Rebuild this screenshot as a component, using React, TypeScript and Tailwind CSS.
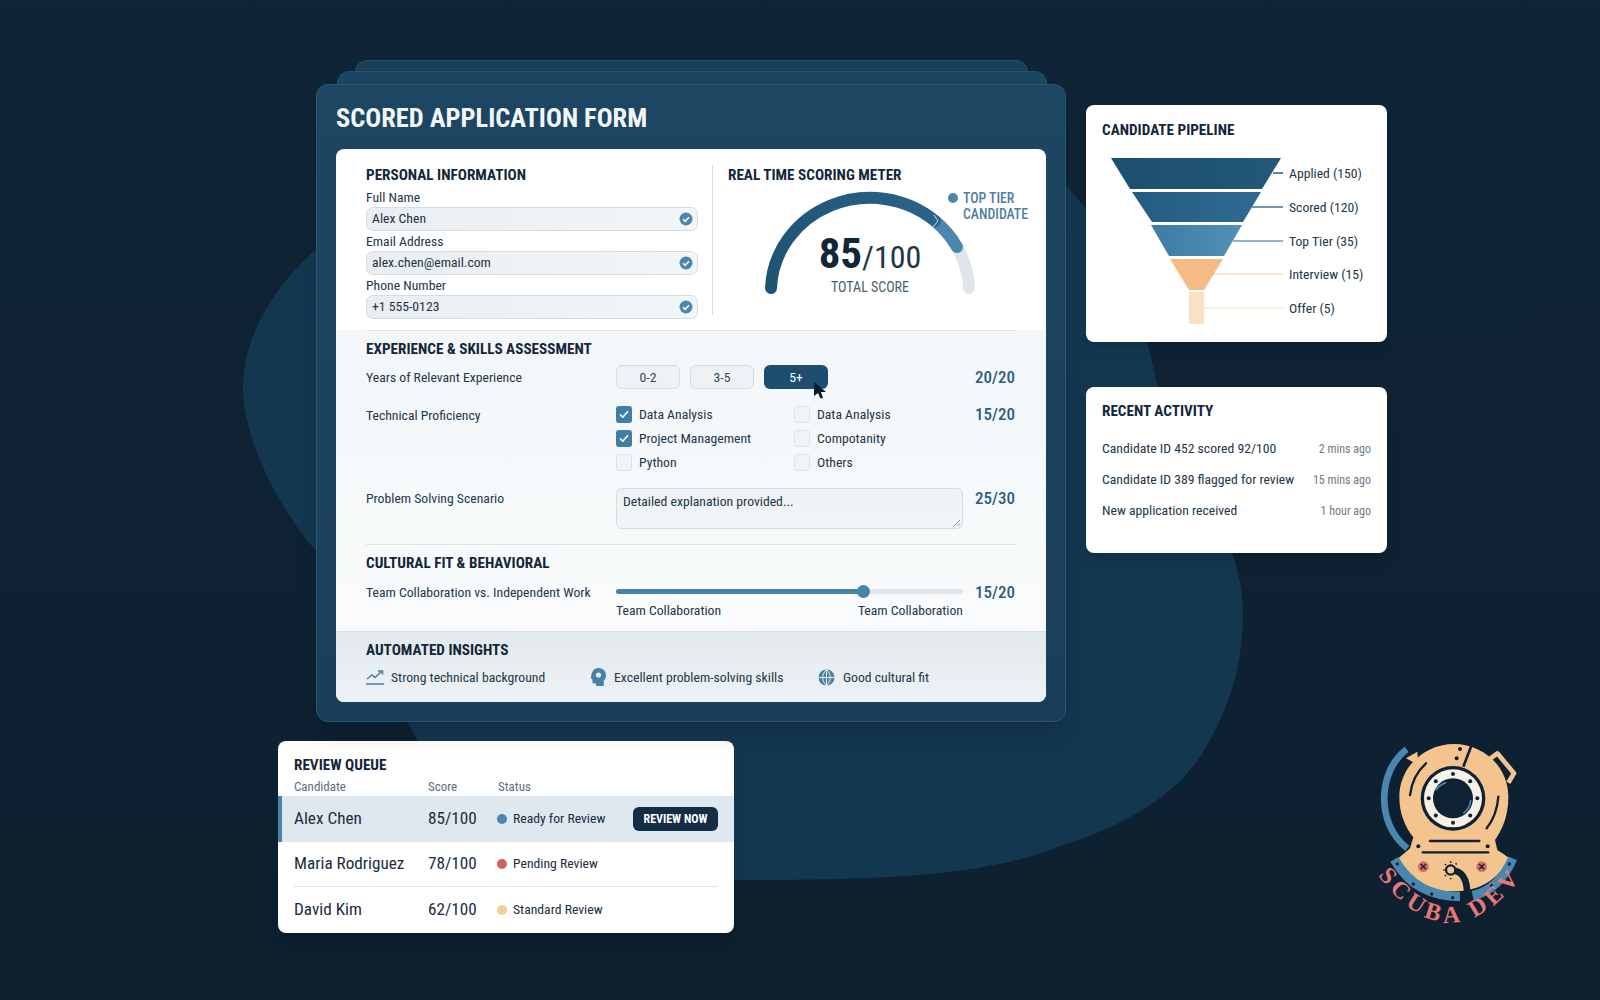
function CheckDot() {
  return (
    <svg width="14" height="14" viewBox="0 0 14 14">
      <circle cx="7" cy="7" r="6.5" fill="#4a87ad" />
      <path d="M4 7.2l2.1 2.1L10 5.2" fill="none" stroke="#fff" strokeWidth="1.6" />
    </svg>
  );
}

function Field({ label, value, gap }: { label: string; value: string; gap: string }) {
  return (
    <>
      <div className={`${gap} h-[16px] text-[13.7px] leading-[14px] text-[#22364a]`}>{label}</div>
      <div className="mt-[1px] flex h-[24px] items-center justify-between rounded-[7px] border border-[#d5dde3] bg-gradient-to-r from-[#e9eef2] to-[#f3f6f8] pl-[5px] pr-[4px] text-[13.7px] text-[#1f3345]">
        <span className="pb-[2px]">{value}</span>
        <CheckDot />
      </div>
    </>
  );
}

function Check({ label, on }: { label: string; on?: boolean }) {
  return (
    <div className="flex h-[24px] items-center gap-[7px] text-[13.7px] text-[#22364a]">
      {on ? (
        <span className="flex h-[17px] w-[16px] items-center justify-center rounded-[3px] bg-[#3f7ea5]">
          <svg width="12" height="12" viewBox="0 0 12 12">
            <path d="M2 6.4l2.8 2.8L10 3.2" fill="none" stroke="#fff" strokeWidth="1.6" />
          </svg>
        </span>
      ) : (
        <span className="h-[17px] w-[16px] rounded-[3px] border border-[#dde3e7] bg-[#f1f4f6]" />
      )}
      <span>{label}</span>
    </div>
  );
}

function Score({ value }: { value: string }) {
  return <div className="w-[52px] text-right text-[17px] font-medium leading-[20px] text-[#2c5c7e]">{value}</div>;
}

function Segment({ label, active }: { label: string; active?: boolean }) {
  return (
    <div
      className={
        active
          ? "flex h-[24px] w-[64px] items-center justify-center rounded-[6px] bg-[#1d4e70] text-[13.7px] text-white"
          : "flex h-[24px] w-[64px] items-center justify-center rounded-[6px] border border-[#d6dde2] bg-[#eef2f5] text-[13.7px] text-[#33475a]"
      }
    >
      {label}
    </div>
  );
}

function Heading({ children }: { children: string }) {
  return <div className="h-[18px] text-[15.2px] font-bold leading-[18px] text-[#14263a]">{children}</div>;
}

function Gauge() {
  return (
    <div className="relative -mt-[1px] h-[130px] w-[284px]">
      <svg className="absolute inset-0" width="284" height="130" viewBox="0 0 284 130">
        <defs>
          <linearGradient id="arc" x1="0" x2="1" y1="0" y2="0">
            <stop offset="0" stopColor="#1f5476" />
            <stop offset="1" stopColor="#2a6489" />
          </linearGradient>
        </defs>
        <path d="M229 64A99 94 0 0 1 241 105" fill="none" stroke="#dfe5ea" strokeWidth="12" strokeLinecap="round" />
        <path d="M207 38A99 94 0 0 1 229 64" fill="none" stroke="#4a86ad" strokeWidth="12" strokeLinecap="round" />
        <path d="M43 105A99 94 0 0 1 207 38" fill="none" stroke="url(#arc)" strokeWidth="12" strokeLinecap="round" />
        <path d="M206 32L210 38L205 44" fill="none" stroke="#cfe0ea" strokeWidth="1" />
      </svg>
      <div className="relative flex flex-col items-center pt-[48px]">
        <div className="flex h-[44px] items-baseline leading-[44px] text-[#12263a]">
          <span className="text-[43px] font-bold">85</span>
          <span className="text-[32px] text-[#1e3548]">/100</span>
        </div>
        <div className="mt-[4px] text-[14px] leading-[16px] text-[#4a5f70]">TOTAL SCORE</div>
      </div>
      <div className="absolute left-[220px] top-[7px] w-[90px] text-[13.8px] font-medium leading-[16px] text-[#4f7f9c]">
        <span className="mr-[5px] inline-block h-[10px] w-[10px] rounded-full bg-[#4a87ad]" />
        TOP TIER
        <div className="pl-[15px]">CANDIDATE</div>
      </div>
    </div>
  );
}

function Funnel() {
  const rows = [
    { y: 24, x: 187, label: "Applied (150)", line: "#2b5f80" },
    { y: 58, x: 166, label: "Scored (120)", line: "#3f7496" },
    { y: 92, x: 147, label: "Top Tier (35)", line: "#6d9ab6" },
    { y: 125, x: 127, label: "Interview (15)", line: "#f6dcbd" },
    { y: 159, x: 118, label: "Offer (5)", line: "#f8e8d4" },
  ];
  return (
    <svg className="mt-[10px] block" width="301" height="180" viewBox="0 0 301 180">
      <defs>
        <linearGradient id="f1" x1="0" x2="1" y1="0" y2="0">
          <stop offset="0" stopColor="#1c4e70" />
          <stop offset="1" stopColor="#23587a" />
        </linearGradient>
        <linearGradient id="f2" x1="0" x2="1" y1="0" y2="0">
          <stop offset="0" stopColor="#245c81" />
          <stop offset="1" stopColor="#2f6b91" />
        </linearGradient>
        <linearGradient id="f3" x1="0" x2="1" y1="0" y2="0">
          <stop offset="0" stopColor="#3c7ba4" />
          <stop offset="1" stopColor="#5390b7" />
        </linearGradient>
      </defs>
      {rows.map((r) => (
        <line key={r.label} x1={r.x} x2="197" y1={r.y} y2={r.y} stroke={r.line} strokeWidth="1.5" />
      ))}
      <polygon points="25,9 195,9 176,40 44,40" fill="url(#f1)" />
      <polygon points="46,43 175,43 157,73 66,73" fill="url(#f2)" />
      <polygon points="65,76 156,76 138,107 83,107" fill="url(#f3)" />
      <polygon points="84,110 137,110 118,141 103,141" fill="#f5bb85" />
      <rect x="103" y="143" width="15" height="32" fill="#fae0c4" />
      {rows.map((r) => (
        <text key={r.label} x="203" y={r.y + 5} fontSize="13.7" fill="#22364a">
          {r.label}
        </text>
      ))}
    </svg>
  );
}

function Logo() {
  const bolts = [0, 45, 90, 135, 180, 225, 270, 315];
  const rivets = [
    [112, 402],
    [160, 462],
    [215, 492],
    [278, 503],
    [395, 467],
    [448, 402],
  ];
  return (
    <svg className="ml-[274px] mt-[177px] shrink-0" width="180" height="200" viewBox="0 0 540 600">
      <path d="M140 58C55 120 45 280 142 355" fill="none" stroke="#4a87b0" strokeWidth="20" />
      <path d="M388 88L412 70L462 130L445 158" fill="none" stroke="#f3c48d" strokeWidth="14" strokeLinejoin="round" />
      <path d="M138 85L172 65L175 105Z" fill="#f3c48d" />
      <path d="M118 200C118 110 195 42 282 42C370 42 445 110 445 200C445 262 425 300 405 330L412 360C430 372 445 380 448 388C405 462 345 484 280 484C210 484 150 462 112 388C125 375 140 365 150 355L160 322C135 290 118 250 118 200Z" fill="#f3c48d" />
      <path d="M335 45L310 110" stroke="#0f2233" strokeWidth="8" />
      <circle cx="300" cy="57" r="6" fill="#0f2233" />
      <circle cx="290" cy="85" r="6" fill="#0f2233" />
      <path d="M198 100C170 125 155 155 150 195" fill="none" stroke="#0f2233" strokeWidth="7" strokeLinecap="round" />
      <path d="M415 200C412 240 400 270 380 295" fill="none" stroke="#0f2233" strokeWidth="7" strokeLinecap="round" />
      <circle cx="279" cy="205" r="97" fill="#0f2233" />
      <circle cx="279" cy="205" r="87" fill="#f6f1e7" />
      <circle cx="279" cy="205" r="60" fill="#0f2233" />
      <path d="M228 180A55 55 0 0 1 258 158" fill="none" stroke="#4a87b0" strokeWidth="5" />
      <path d="M332 210A55 55 0 0 1 310 250" fill="none" stroke="#4a87b0" strokeWidth="5" />
      {bolts.map((a) => (
        <circle
          key={a}
          cx={279 + 73 * Math.cos((a * Math.PI) / 180)}
          cy={205 + 73 * Math.sin((a * Math.PI) / 180)}
          r="6"
          fill="#0f2233"
        />
      ))}
      <path d="M210 333H358M188 367H385" stroke="#0f2233" strokeWidth="7" strokeLinecap="round" />
      <circle cx="175" cy="349" r="6" fill="#0f2233" />
      <circle cx="383" cy="349" r="6" fill="#0f2233" />
      <path d="M103 388C150 470 215 498 300 500M338 497C390 485 430 450 458 385" fill="none" stroke="#4a87b0" strokeWidth="28" />
      {rivets.map(([x, y]) => (
        <circle key={x} cx={x} cy={y} r="5" fill="#0f2233" />
      ))}
      <circle cx="190" cy="410" r="16" fill="#d96a6a" />
      <circle cx="365" cy="410" r="16" fill="#d96a6a" />
      <path d="M182 402L198 418M198 402L182 418M357 402L373 418M373 402L357 418" stroke="#0f2233" strokeWidth="4" />
      <circle cx="272" cy="420" r="14" fill="none" stroke="#0f2233" strokeWidth="7" />
      <path d="M285 422C320 430 325 470 320 520" fill="none" stroke="#0f2233" strokeWidth="20" />
      <path d="M250 420H254M272 394V398M272 444V448M255 402L258 405M255 438L258 435M290 400L287 403" stroke="#0f2233" strokeWidth="5" />
      <path id="logo-arc" d="M40 418Q270 738 500 418" fill="none" />
      <text fontFamily="Liberation Serif" fontWeight="700" fontSize="72" fill="#e87878" letterSpacing="14">
        <textPath href="#logo-arc" startOffset="50%" textAnchor="middle">
          SCUBA DEV
        </textPath>
      </text>
    </svg>
  );
}

export default function App() {
  return (
    <div className="relative flex h-[1000px] w-[1600px] overflow-hidden bg-gradient-to-b from-[#0f2436] to-[#0d2030] pl-[278px] pt-[60px] font-['Roboto',sans-serif] [font-stretch:75%]">
      <svg className="absolute inset-0" width="1600" height="1000" viewBox="0 0 1600 1000">
        <path
          d="M316 249C270 290 243 340 243 387C243 440 280 510 316 551C350 600 385 680 417 740C500 850 650 885 735 880C850 880 980 880 1060 846C1130 825 1185 790 1210 740C1232 700 1243 660 1243 613C1243 590 1238 570 1232 553C1210 480 1175 430 1158 387C1152 365 1150 350 1147 343C1120 270 1100 215 1060 180L500 170C420 190 360 210 316 249Z"
          fill="#143750"
        />
      </svg>

      {/* form stack + review queue */}
      <div className="relative w-[788px] shrink-0">
        <div className="ml-[77px] mr-[38px] -mb-[13px] h-[24px] rounded-t-xl border border-[#265070] bg-[#1a4058]" />
        <div className="ml-[59px] mr-[19px] -mb-[11px] h-[24px] rounded-t-xl border border-[#275272] bg-[#1c4561]" />
        <div className="relative ml-[38px] h-[638px] w-[750px] rounded-xl border border-[#2a5676] bg-gradient-to-b from-[#1d4662] to-[#1a3f59] px-[19px] pt-[18px] shadow-xl">
          <h1 className="mb-[16px] h-[30px] text-[26.4px] font-bold leading-[30px] text-[#f4f7f9]">SCORED APPLICATION FORM</h1>

          <div className="h-[553px] w-[710px] overflow-hidden rounded-lg bg-white">
            <div className="flex h-[181px] px-[30px] pt-[17px]">
              <div className="w-[332px]">
                <Heading>PERSONAL INFORMATION</Heading>
                <Field label="Full Name" value="Alex Chen" gap="mt-[6px]" />
                <Field label="Email Address" value="alex.chen@email.com" gap="mt-[3px]" />
                <Field label="Phone Number" value="+1 555-0123" gap="mt-[3px]" />
              </div>
              <div className="-mt-[1px] ml-[14px] mr-[15px] h-[150px] w-px bg-[#d5dce1]" />
              <div>
                <Heading>REAL TIME SCORING METER</Heading>
                <Gauge />
              </div>
            </div>

            <div className="h-[301px] bg-gradient-to-b from-[#f3f7f9] to-[#f9fbfc] px-[30px]">
              <div className="border-t border-[#dfe5e9] pt-[9px]">
                <Heading>EXPERIENCE &amp; SKILLS ASSESSMENT</Heading>
              </div>
              <div className="mt-[7px] flex items-center">
                <div className="w-[250px] text-[13.7px] text-[#22364a]">Years of Relevant Experience</div>
                <div className="flex w-[347px] gap-[10px]">
                  <Segment label="0-2" />
                  <Segment label="3-5" />
                  <div className="relative">
                    <Segment label="5+" active />
                    <svg className="absolute left-[49px] top-[16px]" width="14" height="18" viewBox="0 0 14 18">
                      <path d="M1 1L13 11H8L10 17L7.5 17.5L5 12L1 15Z" fill="#0d1b26" />
                    </svg>
                  </div>
                </div>
                <Score value="20/20" />
              </div>
              <div className="mt-[13px] flex">
                <div className="w-[250px] pt-[4px] text-[13.7px] leading-[18px] text-[#22364a]">Technical Proficiency</div>
                <div className="grid w-[347px] grid-cols-[178px_1fr]">
                  <Check label="Data Analysis" on />
                  <Check label="Data Analysis" />
                  <Check label="Project Management" on />
                  <Check label="Compotanity" />
                  <Check label="Python" />
                  <Check label="Others" />
                </div>
                <div className="pt-[2px]">
                  <Score value="15/20" />
                </div>
              </div>
              <div className="mt-[14px] flex">
                <div className="w-[250px] pt-[1px] text-[13.7px] leading-[18px] text-[#22364a]">Problem Solving Scenario</div>
                <div className="relative h-[41px] w-[347px] rounded-[6px] border border-[#d5dce1] bg-gradient-to-b from-[#eef2f5] to-[#f3f6f8] px-[6px] pt-[3px] text-[13.7px] leading-[18px] text-[#22364a]">
                  Detailed explanation provided...
                  <svg className="absolute bottom-[1px] right-[1px]" width="8" height="8" viewBox="0 0 8 8">
                    <path d="M1 7L7 1M4.5 7L7 4.5" stroke="#7c8a95" strokeWidth="1" />
                  </svg>
                </div>
                <Score value="25/30" />
              </div>
              <div className="mt-[15px] border-t border-[#dfe5e9] pt-[9px]">
                <Heading>CULTURAL FIT &amp; BEHAVIORAL</Heading>
              </div>
              <div className="mt-[11px] flex">
                <div className="w-[250px] text-[13.7px] leading-[18px] text-[#22364a]">Team Collaboration vs. Independent Work</div>
                <div className="w-[347px]">
                  <div className="relative mt-[6px] h-[5px] rounded-full bg-[#e0e6ea]">
                    <div className="h-[5px] w-[247px] rounded-full bg-[#4a81a6]" />
                    <div className="absolute left-[241px] top-[-4px] h-[13px] w-[13px] rounded-full bg-[#4a81a6]" />
                  </div>
                  <div className="mt-[7px] flex justify-between text-[13.7px] leading-[18px] text-[#22364a]">
                    <span>Team Collaboration</span>
                    <span>Team Collaboration</span>
                  </div>
                </div>
                <div className="-mt-[1px]">
                  <Score value="15/20" />
                </div>
              </div>
            </div>

            <div className="h-[71px] border-t border-[#d8e0e5] bg-gradient-to-b from-[#e2e9ed] to-[#eef2f5] px-[30px] pt-[9px]">
              <Heading>AUTOMATED INSIGHTS</Heading>
              <div className="mt-[8px] flex items-center text-[13.7px] text-[#22364a]">
                <svg width="18" height="18" viewBox="0 0 18 18">
                  <path d="M1 11L6 7L9 9.5L16 3M12 3H16.5V6.5" fill="none" stroke="#4a81a6" strokeWidth="1.5" />
                  <path d="M0 16H18" stroke="#4a81a6" strokeWidth="1.5" />
                </svg>
                <span className="ml-[7px] w-[199px]">Strong technical background</span>
                <svg width="17" height="19" viewBox="0 0 17 19">
                  <path d="M8.5 0C12.6 0 16 3 16 7.2C16 9.6 15 11.4 13.8 12.6V18H6V15.4H3.6C2.8 15.4 2.4 14.8 2.4 14V11.4L1 10.4C1 4 4 0 8.5 0Z" fill="#4a81a6" />
                  <circle cx="8.5" cy="7" r="2.6" fill="#e6edf1" />
                </svg>
                <span className="ml-[7px] w-[204px]">Excellent problem-solving skills</span>
                <svg width="17" height="17" viewBox="0 0 17 17">
                  <circle cx="8.5" cy="8.5" r="8" fill="#4a81a6" />
                  <path d="M8.5 0.5V16.5M0.5 8.5H16.5M8.5 0.5C3.5 5 3.5 12 8.5 16.5M8.5 0.5C13.5 5 13.5 12 8.5 16.5" fill="none" stroke="#e6edf1" strokeWidth="1" />
                </svg>
                <span className="ml-[8px]">Good cultural fit</span>
              </div>
            </div>
          </div>
        </div>

        <div className="mt-[19px] h-[192px] w-[456px] overflow-hidden rounded-lg bg-white pt-[16px] shadow-lg">
          <div className="px-[16px] text-[15.2px] font-bold leading-[16px] text-[#14263a]">REVIEW QUEUE</div>
          <div className="mt-[6px] flex h-[16px] px-[16px] text-[13px] leading-[16px] text-[#5d6f7e]">
            <span className="w-[134px]">Candidate</span>
            <span className="w-[70px]">Score</span>
            <span>Status</span>
          </div>
          <div className="mt-[1px] flex h-[46px] items-center border-l-4 border-[#4a81a6] bg-[#dfe8ee] pl-[12px] text-[17.2px] text-[#1a2d3f]">
            <span className="w-[134px]">Alex Chen</span>
            <span className="w-[69px]">85/100</span>
            <span className="h-[10px] w-[10px] rounded-full bg-[#4a87b0]" />
            <span className="ml-[6px] w-[120px] pb-[2px] text-[13.7px]">Ready for Review</span>
            <span className="flex h-[24px] w-[85px] items-center justify-center rounded-[6px] bg-[#132d44] text-[12px] font-bold text-white">REVIEW NOW</span>
          </div>
          <div className="mx-[16px] flex h-[45px] items-center border-b border-[#dfe3e6] text-[17.2px] text-[#1a2d3f]">
            <span className="w-[134px]">Maria Rodriguez</span>
            <span className="w-[69px]">78/100</span>
            <span className="h-[10px] w-[10px] rounded-full bg-[#d2605e]" />
            <span className="ml-[6px] pb-[2px] text-[13.7px]">Pending Review</span>
          </div>
          <div className="mx-[16px] flex h-[46px] items-center text-[17.2px] text-[#1a2d3f]">
            <span className="w-[134px]">David Kim</span>
            <span className="w-[69px]">62/100</span>
            <span className="h-[10px] w-[10px] rounded-full bg-[#f5cf92]" />
            <span className="ml-[6px] pb-[2px] text-[13.7px]">Standard Review</span>
          </div>
        </div>
      </div>

      {/* side cards */}
      <div className="relative ml-[20px] w-[301px] shrink-0 pt-[45px]">
        <div className="h-[237px] rounded-lg bg-white pt-[16px] shadow-lg">
          <div className="pl-[16px] text-[15.2px] font-bold leading-[18px] text-[#14263a]">CANDIDATE PIPELINE</div>
          <Funnel />
        </div>
        <div className="mt-[45px] h-[166px] rounded-lg bg-white px-[16px] pt-[16px] shadow-lg">
          <div className="text-[15.2px] font-bold leading-[16px] text-[#14263a]">RECENT ACTIVITY</div>
          <div className="mt-[14px] flex h-[31px] items-center justify-between text-[13.7px] text-[#22364a]">
            <span>Candidate ID 452 scored 92/100</span>
            <span className="text-[12px] text-[#6b7a86]">2 mins ago</span>
          </div>
          <div className="flex h-[31px] items-center justify-between text-[13.7px] text-[#22364a]">
            <span>Candidate ID 389 flagged for review</span>
            <span className="text-[12px] text-[#6b7a86]">15 mins ago</span>
          </div>
          <div className="flex h-[31px] items-center justify-between text-[13.7px] text-[#22364a]">
            <span>New application received</span>
            <span className="text-[12px] text-[#6b7a86]">1 hour ago</span>
          </div>
        </div>
        <Logo />
      </div>
    </div>
  );
}
